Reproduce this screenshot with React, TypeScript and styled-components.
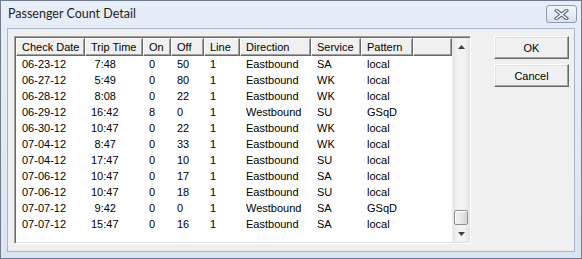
import React from "react";
import styled, { createGlobalStyle } from "styled-components";

const GlobalStyle = createGlobalStyle`
  html, body {
    margin: 0;
    padding: 0;
    background: #ffffff;
  }
`;

const Window = styled.div`
  width: 582px;
  height: 259px;
  box-sizing: border-box;
  border: 1px solid #6f7c8e;
  background: linear-gradient(#e7eef7, #dbe5f1);
  display: flex;
  flex-direction: column;
  padding: 0 6px 6px 6px;
`;

const TitleBar = styled.div`
  height: 27px;
  display: flex;
  align-items: flex-start;
  justify-content: space-between;
`;

const Title = styled.div`
  font-family: Lato, "Liberation Sans", sans-serif;
  font-size: 12.5px;
  color: #1e1e1e;
  padding: 5px 0 0 1px;
`;

const CloseButton = styled.div`
  width: 29px;
  height: 16px;
  margin: 4px -2px 0 0;
  border: 1px solid #8d9bb0;
  border-radius: 3px;
  background: linear-gradient(#f1f5fa, #dbe4ef);
  display: flex;
  align-items: center;
  justify-content: center;
`;

const Client = styled.div`
  flex: 1;
  border: 1px solid #a9b5c6;
  background: #f0f0f0;
  display: flex;
  align-items: flex-start;
  padding: 7px 5px 7px 6px;
  gap: 23px;
`;

const ListBox = styled.div`
  width: 457px;
  height: 208px;
  box-sizing: border-box;
  border: 1px solid;
  border-color: #a0a0a0 #ffffff #ffffff #a0a0a0;
  box-shadow: inset 1px 1px 0 #696969, inset -1px -1px 0 #e3e3e3;
  background: #ffffff;
  padding: 1px;
  display: flex;
`;

const Grid = styled.div`
  flex: 1;
  display: flex;
  flex-direction: column;
  font-family: "Liberation Sans", Arial, sans-serif;
  font-size: 11px;
  color: #000000;
`;

const HeaderRow = styled.div`
  display: flex;
  height: 18px;
`;

const HeaderCell = styled.div<{ $w: number }>`
  width: ${(p) => p.$w}px;
  box-sizing: border-box;
  background: #f0f0f0;
  border: 1px solid;
  border-color: #ffffff #696969 #696969 #ffffff;
  box-shadow: inset -1px -1px 0 #a0a0a0;
  padding-left: 5px;
  line-height: 16px;
  white-space: nowrap;
  overflow: hidden;
`;

const Row = styled.div`
  display: flex;
  height: 16px;
  line-height: 17px;
`;

const Cell = styled.div<{ $w: number; $right?: boolean }>`
  width: ${(p) => p.$w}px;
  box-sizing: border-box;
  padding-left: 6px;
  padding-right: ${(p) => (p.$right ? 27 : 0)}px;
  text-align: ${(p) => (p.$right ? "right" : "left")};
  white-space: nowrap;
`;

const ScrollBar = styled.div`
  width: 17px;
  display: flex;
  flex-direction: column;
  background: linear-gradient(90deg, #e6e6e6, #f2f2f2 30%, #f2f2f2 70%, #e6e6e6);
  border-left: 1px solid #ececec;
  box-sizing: border-box;
`;

const ArrowButton = styled.div`
  height: 17px;
  display: flex;
  align-items: center;
  justify-content: center;
`;

const Track = styled.div`
  flex: 1;
  display: flex;
  flex-direction: column;
  justify-content: flex-end;
  align-items: center;
`;

const Thumb = styled.div`
  width: 14px;
  height: 15px;
  box-sizing: border-box;
  border: 1px solid #8e8f8f;
  border-radius: 2px;
  background: linear-gradient(90deg, #f3f3f3, #e8e8e8 50%, #d6d6d6);
  box-shadow: inset 1px 1px 0 #ffffff;
`;

const Buttons = styled.div`
  display: flex;
  flex-direction: column;
  gap: 5px;
`;

const Button = styled.button`
  width: 75px;
  height: 23px;
  margin: 0;
  padding: 0;
  box-sizing: border-box;
  font-family: "Liberation Sans", Arial, sans-serif;
  font-size: 11px;
  color: #000000;
  background: #f0f0f0;
  border: 1px solid;
  border-color: #ffffff #696969 #696969 #ffffff;
  box-shadow: inset -1px -1px 0 #a0a0a0, inset 1px 1px 0 #e3e3e3;
  border-radius: 0;
`;

const columns = [
  { title: "Check Date", w: 69 },
  { title: "Trip Time", w: 58 },
  { title: "On", w: 28 },
  { title: "Off", w: 33 },
  { title: "Line", w: 36 },
  { title: "Direction", w: 71 },
  { title: "Service", w: 50 },
  { title: "Pattern", w: 52 },
];

const rows = [
  ["06-23-12", "7:48", "0", "50", "1", "Eastbound", "SA", "local"],
  ["06-27-12", "5:49", "0", "80", "1", "Eastbound", "WK", "local"],
  ["06-28-12", "8:08", "0", "22", "1", "Eastbound", "WK", "local"],
  ["06-29-12", "16:42", "8", "0", "1", "Westbound", "SU", "GSqD"],
  ["06-30-12", "10:47", "0", "22", "1", "Eastbound", "WK", "local"],
  ["07-04-12", "8:47", "0", "33", "1", "Eastbound", "WK", "local"],
  ["07-04-12", "17:47", "0", "10", "1", "Eastbound", "SU", "local"],
  ["07-06-12", "10:47", "0", "17", "1", "Eastbound", "SA", "local"],
  ["07-06-12", "10:47", "0", "18", "1", "Eastbound", "SU", "local"],
  ["07-07-12", "9:42", "0", "0", "1", "Westbound", "SA", "GSqD"],
  ["07-07-12", "15:47", "0", "16", "1", "Eastbound", "SA", "local"],
];

const App = () => {
  return (
    <Window>
      <GlobalStyle />
      <TitleBar>
        <Title>Passenger Count Detail</Title>
        <CloseButton>
          <svg width="15" height="11" viewBox="0 0 15 11">
            <path
              d="M2.5 1.5 L12.5 9.5 M12.5 1.5 L2.5 9.5"
              stroke="#5c6677"
              strokeWidth="3.6"
              strokeLinecap="square"
            />
            <path
              d="M2.5 1.5 L12.5 9.5 M12.5 1.5 L2.5 9.5"
              stroke="#ffffff"
              strokeWidth="1.5"
              strokeLinecap="square"
            />
          </svg>
        </CloseButton>
      </TitleBar>
      <Client>
        <ListBox>
          <Grid>
            <HeaderRow>
              {columns.map((c) => (
                <HeaderCell key={c.title} $w={c.w}>
                  {c.title}
                </HeaderCell>
              ))}
              <HeaderCell $w={39} />
            </HeaderRow>
            {rows.map((r, i) => (
              <Row key={i}>
                {r.map((v, j) => (
                  <Cell key={j} $w={columns[j].w} $right={j === 1}>
                    {v}
                  </Cell>
                ))}
              </Row>
            ))}
          </Grid>
          <ScrollBar>
            <ArrowButton>
              <svg width="7" height="4" viewBox="0 0 7 4">
                <path d="M3.5 0 L7 4 L0 4 Z" fill="#404040" />
              </svg>
            </ArrowButton>
            <Track>
              <Thumb />
            </Track>
            <ArrowButton>
              <svg width="7" height="4" viewBox="0 0 7 4">
                <path d="M0 0 L7 0 L3.5 4 Z" fill="#404040" />
              </svg>
            </ArrowButton>
          </ScrollBar>
        </ListBox>
        <Buttons>
          <Button>OK</Button>
          <Button>Cancel</Button>
        </Buttons>
      </Client>
    </Window>
  );
};

export default App;
